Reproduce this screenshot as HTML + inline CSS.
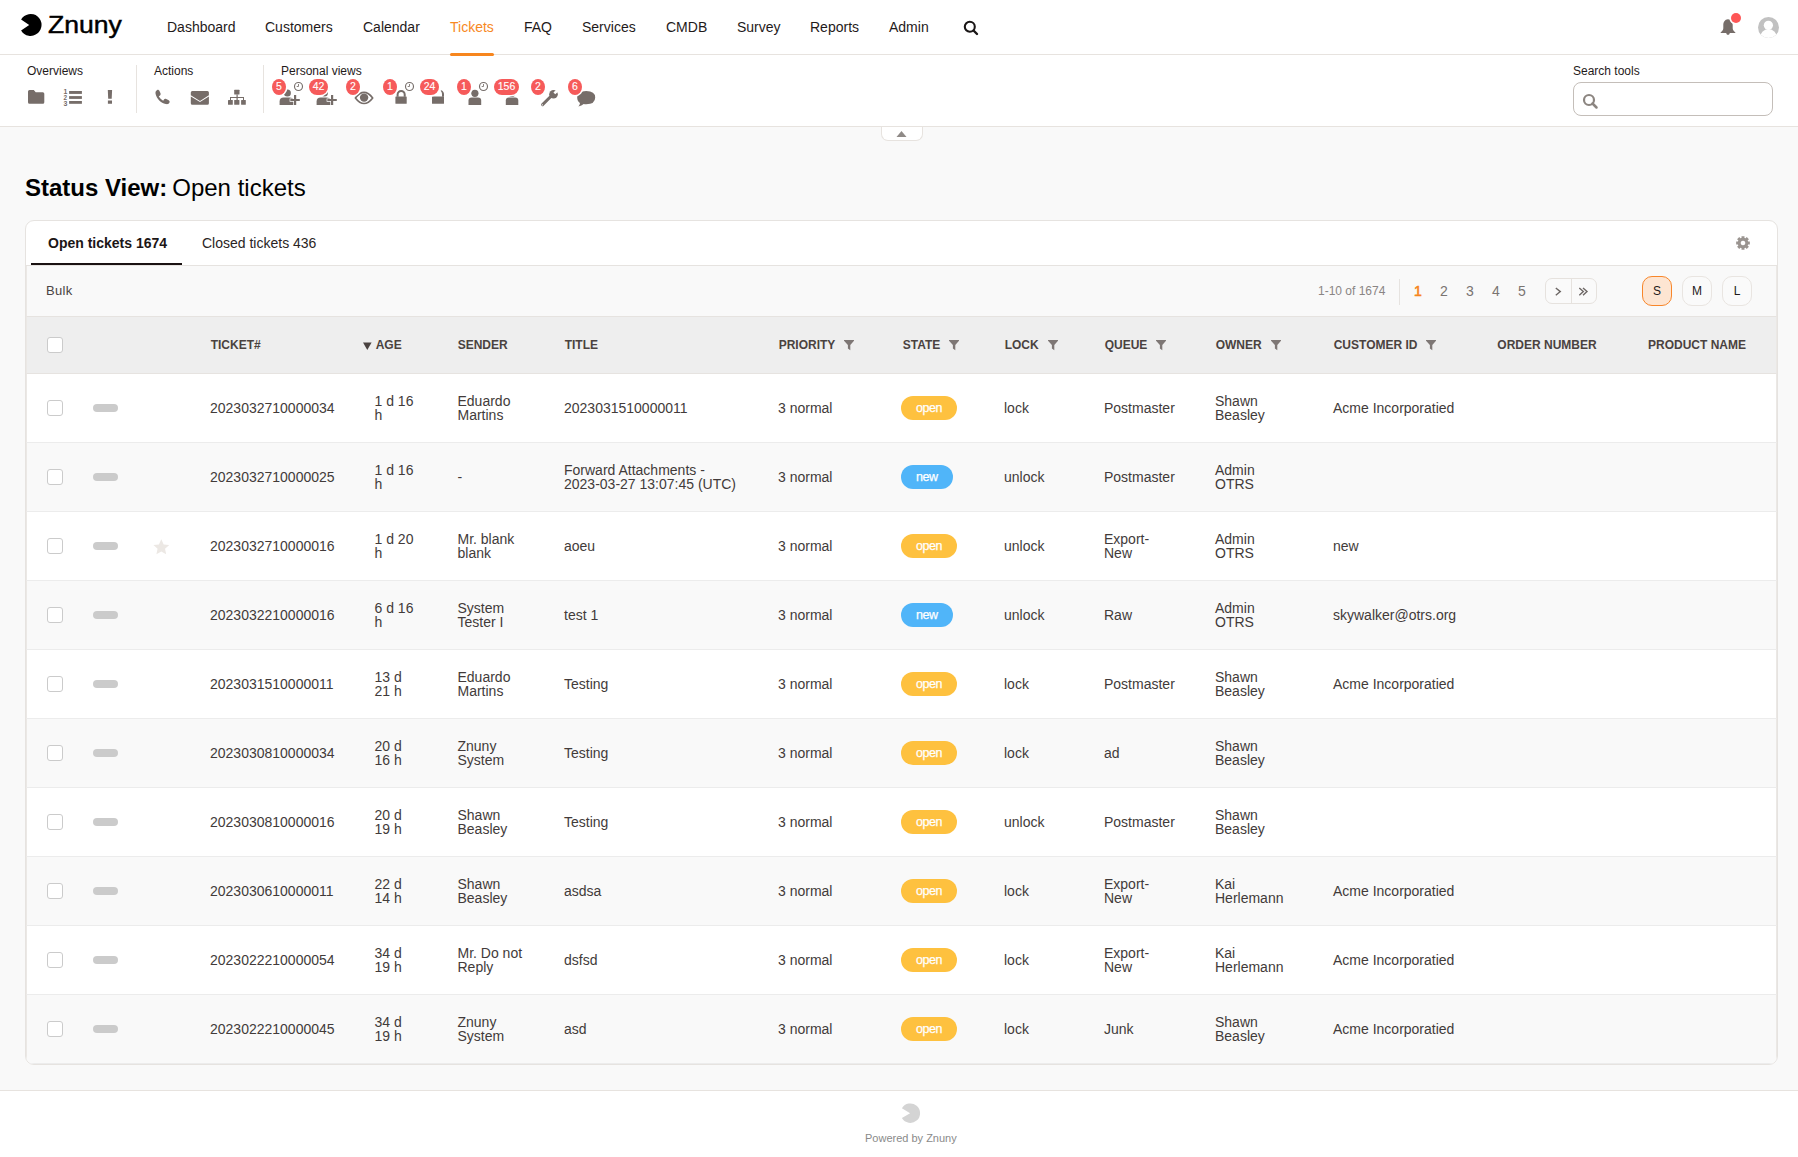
<!DOCTYPE html>
<html><head><meta charset="utf-8">
<style>
*{box-sizing:border-box;margin:0;padding:0}
html,body{width:1798px;height:1157px;overflow:hidden}
body{font-family:"Liberation Sans",sans-serif;background:#f9f9f9;color:#3a3433;position:relative}
.abs{position:absolute}
#top{position:absolute;left:0;top:0;width:1798px;height:55px;background:#fff;border-bottom:1px solid #e7e3df}
.nav{position:absolute;top:19px;font-size:14px;line-height:16px;color:#1f1a1a;white-space:nowrap}
#tb{position:absolute;left:0;top:55px;width:1798px;height:72px;background:#fff;border-bottom:1px solid #e7e3df}
.lbl{position:absolute;top:9px;font-size:12px;line-height:14px;color:#1f1a1a;white-space:nowrap}
.sep{position:absolute;top:10px;width:1px;height:48px;background:#e7e3df}
.ic{position:absolute;fill:#766d69}
.badge{position:absolute;top:24px;height:15px;min-width:14px;border-radius:8px;background:#f55a5a;color:#fff;font-size:11px;line-height:15px;text-align:center;padding:0 3px;font-weight:400}
.clk{position:absolute;top:27px;width:9px;height:9px;border:1px solid #8a827e;border-radius:50%}
.clk:after{content:"";position:absolute;left:3px;top:1px;width:2px;height:3.5px;border-right:1px solid #8a827e;border-bottom:1px solid #8a827e}
#card{position:absolute;left:25px;top:220px;width:1753px;height:845px;background:#fff;border:1px solid #e6e3e0;border-radius:9px;overflow:hidden}
.hdr{position:absolute;top:0;font-size:12px;font-weight:700;line-height:12px;color:#4a4240;white-space:nowrap;text-transform:uppercase}
.row{position:absolute;left:0;width:1751px;height:69px;border-bottom:1px solid #ececec;border-left:1px solid #ebe8e5;border-right:1px solid #ebe8e5}
.cell{position:absolute;top:0;height:68px;display:flex;align-items:center;font-size:14px;line-height:14px;white-space:nowrap;color:#423b3a}
.cb{position:absolute;width:16px;height:16px;border:1px solid #cbcbcb;border-radius:3px;background:#fff}
.pill{position:absolute;width:25px;height:8px;border-radius:4px;background:#cbcbcb}
.st{height:24px;border-radius:12px;color:#fff;font-size:12.5px;font-weight:400;line-height:24px;padding:0 15px;letter-spacing:-0.45px;-webkit-text-stroke:0.25px #fff}
.open{background:#fec13f}
.new{background:#50b5f9}
.flt{display:inline-block;vertical-align:middle;margin-left:9px}
</style></head><body>

<!-- TOP NAV -->
<div id="top">
  <svg class="abs" style="left:0;top:0" width="60" height="50" viewBox="0 0 60 50"><path d="M29.2 24.9 L21.1 19.5 A10.95 10.95 0 1 1 21.1 30.4 Z" fill="#000"/></svg>
  <div class="abs" style="left:48px;top:10.6px;font-size:23.5px;line-height:28px;font-weight:400;color:#000;-webkit-text-stroke:0.45px #000;transform:scaleX(1.13);transform-origin:0 0">Znuny</div>
  <div class="nav" style="left:167px">Dashboard</div>
  <div class="nav" style="left:265px">Customers</div>
  <div class="nav" style="left:363px">Calendar</div>
  <div class="nav" style="left:450px;color:#f7891f">Tickets</div>
  <div class="abs" style="left:450px;top:53px;width:44px;height:3px;z-index:3;border-radius:2px;background:#f7861e"></div>
  <div class="nav" style="left:524px">FAQ</div>
  <div class="nav" style="left:582px">Services</div>
  <div class="nav" style="left:666px">CMDB</div>
  <div class="nav" style="left:737px">Survey</div>
  <div class="nav" style="left:810px">Reports</div>
  <div class="nav" style="left:889px">Admin</div>
  <svg class="abs" style="left:963px;top:20px" width="16" height="16" viewBox="0 0 16 16"><circle cx="6.8" cy="6.8" r="5" fill="none" stroke="#1a1616" stroke-width="2.1"/><path d="M10.5 10.5 L14 14" stroke="#1a1616" stroke-width="2.4" stroke-linecap="round"/></svg>
  <!-- bell -->
  <svg class="abs" style="left:1710px;top:8px" width="40" height="32" viewBox="1710 8 40 32"><path d="M1728 19.2 c-3.3 0.3 -4.7 2.8 -4.7 5.9 v3.2 c0 1.7 -1.2 3 -2.6 3.9 v0.9 h14.6 v-0.9 c-1.4 -0.9 -2.6 -2.2 -2.6 -3.9 v-3.2 c0 -3.1 -1.4 -5.6 -4.7 -5.9z M1726.2 33.1 a1.8 1.8 0 0 0 3.6 0z" fill="#766d69"/><circle cx="1736" cy="18" r="6.6" fill="#fff"/><circle cx="1736" cy="18" r="5" fill="#fe5656"/></svg>
  <svg class="abs" style="left:1757px;top:16px" width="23" height="23" viewBox="0 0 23 23">
    <defs><clipPath id="avc"><circle cx="11.5" cy="11.5" r="10.5"/></clipPath></defs>
    <circle cx="11.5" cy="11.5" r="10.5" fill="#c1c1c1"/>
    <g clip-path="url(#avc)" fill="#fff"><circle cx="11.4" cy="9.3" r="4.6"/><ellipse cx="11.5" cy="22.3" rx="8.6" ry="9.2"/></g>
  </svg>
</div>

<!-- TOOLBAR -->
<div id="tb">
  <div class="lbl" style="left:27px">Overviews</div>
  <div class="lbl" style="left:154px">Actions</div>
  <div class="lbl" style="left:281px">Personal views</div>
  <div class="lbl" style="left:1573px">Search tools</div>
  <div class="sep" style="left:136px"></div>
  <div class="sep" style="left:263px"></div>
  <svg class="abs" style="left:0;top:-55px" width="1798" height="127" viewBox="0 0 1798 127"><path d="M28 91.4 q0-1.5 1.5-1.5 h4.3 l1.9 2.4 h7.1 q1.5 0 1.5 1.5 v8.5 q0 1.5 -1.5 1.5 h-13.3 q-1.5 0 -1.5 -1.5z" fill="#766d69"/><g fill="#766d69"><rect x="69.1" y="91" width="12.8" height="2.9"/><rect x="69.1" y="96.1" width="12.8" height="2.8"/><rect x="69.1" y="101" width="12.8" height="2.8"/><text x="63.6" y="93.6" font-family="Liberation Sans" font-size="7" font-weight="700">1</text><text x="63.6" y="99.8" font-family="Liberation Sans" font-size="6.4" font-weight="700">2</text><text x="63.6" y="106.3" font-family="Liberation Sans" font-size="7" font-weight="700">3</text></g><path d="M107.8 90 h4.3 l-0.4 8.7 h-3.5z M107.9 100.6 h4.1 v3.2 h-4.1z" fill="#766d69"/><path d="M157.2 89.9 c1.1 -0.3 1.9 0.3 2.4 1.3 l0.9 2.1 c0.4 1 0.1 1.8 -0.8 2.4 l-0.9 0.6 c0.9 1.9 2.5 3.5 4.4 4.4 l0.6 -0.9 c0.6 -0.9 1.4 -1.2 2.4 -0.8 l2.1 0.9 c1 0.5 1.6 1.3 1.3 2.4 c-0.5 1.6 -2 2.2 -3.8 1.8 c-5 -1.2 -9 -5.2 -10.2 -10.2 c-0.4 -1.8 0.2 -3.4 1.6 -4z" fill="#766d69"/><path d="M192.3 90.9 h15.1 q1.5 0 1.5 1.5 v2.9 l-8.9 5.6 l-9.2 -5.6 v-2.9 q0 -1.5 1.5 -1.5z M190.8 96.5 l9.2 5.6 l8.9 -5.6 v6.8 q0 1.5 -1.5 1.5 h-15.1 q-1.5 0 -1.5 -1.5z" fill="#766d69"/><g fill="#766d69"><rect x="234.2" y="89.8" width="5.3" height="4.8" rx="0.5"/><rect x="236.5" y="94.4" width="1.2" height="3.2"/><rect x="230" y="97" width="14" height="1"/><rect x="230" y="97" width="1" height="3.3"/><rect x="243" y="97" width="1" height="3.3"/><rect x="236.5" y="97" width="1.2" height="3.3"/><rect x="228" y="100.1" width="4.8" height="4.7" rx="0.5"/><rect x="234.2" y="100.1" width="5.2" height="4.7" rx="0.5"/><rect x="241.1" y="100.1" width="4.7" height="4.7" rx="0.5"/></g><g fill="#766d69"><circle cx="287.40000000000003" cy="93.1" r="3.5"/><path d="M279.6 104.9 v-3.3 q0 -4.1 4.1 -4.1 h5.8 q3.6 0 4.3 2.5 v4.9z"/></g><path d="M294.0 95.1 h2.2 v4 h3.6 v2 h-3.6 v3.8 h-2.2 v-3.8 h-3.7 v-2 h3.7z" fill="#766d69" stroke="#fff" stroke-width="1.3" paint-order="stroke"/><g fill="#766d69"><circle cx="324.40000000000003" cy="93.1" r="3.5"/><path d="M316.6 104.9 v-3.3 q0 -4.1 4.1 -4.1 h5.8 q3.6 0 4.3 2.5 v4.9z"/></g><path d="M331.0 95.1 h2.2 v4 h3.6 v2 h-3.6 v3.8 h-2.2 v-3.8 h-3.7 v-2 h3.7z" fill="#766d69" stroke="#fff" stroke-width="1.3" paint-order="stroke"/><path d="M355.4 97.9 q8.6 -11.2 17.3 0 q-8.7 11.2 -17.3 0z" fill="none" stroke="#766d69" stroke-width="1.7" stroke-linejoin="round"/><circle cx="364.1" cy="97.6" r="4.2" fill="#766d69"/><g fill="#766d69"><path d="M396.6 96.8 v-2.3 a4.55 4.55 0 0 1 9.1 0 v2.3 h-2 v-2.3 a2.55 2.55 0 0 0 -5.1 0 v2.3z"/><rect x="395.4" y="96.5" width="11.3" height="7.3" rx="0.6"/></g><g fill="#766d69"><path d="M442 96.8 v-2.6 c0 -1.5 -0.5 -2.7 -1.4 -3.5 l0.9 -0.4 c1.6 0.9 2.5 2.3 2.5 4 v2.5z"/><rect x="432" y="96.5" width="12" height="7.3" rx="0.6"/></g><g fill="#766d69"><circle cx="474.9" cy="93.3" r="3.6"/><path d="M468.5 104.9 v-4.3 q0 -3.2 3.2 -3.2 h6.3 q3.2 0 3.2 3.2 v4.3z"/></g><g fill="#766d69"><circle cx="511.9" cy="93.3" r="3.6"/><path d="M505.8 104.9 v-4.3 q0 -3.2 3.2 -3.2 h6.1 q3.2 0 3.2 3.2 v4.3z"/></g><g><circle cx="553.5" cy="94.2" r="4.3" fill="#766d69"/><path d="M542.6 104.6 L551 96.3" stroke="#766d69" stroke-width="3" stroke-linecap="round"/><path d="M553.43 92.43 L555.27 94.27 L558.9 90.9 L557 89z" fill="#fff"/><circle cx="542.4" cy="104.8" r="0.65" fill="#fff"/></g><path d="M586.2 90.9 q9 0 9 6.6 q0 6.7 -9 6.7 q-1.3 0 -2.5 -0.3 q-2 1.8 -5.3 2.7 q1.4 -1.5 1.6 -3.6 q-2.8 -1.8 -2.8 -5.5 q0 -6.6 9 -6.6z" fill="#766d69"/><rect x="270.5" y="77.5" width="17" height="19" rx="9.5" fill="#fff"/><rect x="272" y="79" width="14" height="16" rx="8" fill="#f65a5a"/><text x="279.0" y="90.3" text-anchor="middle" font-family="Liberation Sans" font-size="10.5" fill="#fff" stroke="#fff" stroke-width="0.12">5</text><rect x="307.5" y="77.5" width="22" height="19" rx="9.5" fill="#fff"/><rect x="309" y="79" width="19" height="16" rx="8" fill="#f65a5a"/><text x="318.5" y="90.3" text-anchor="middle" font-family="Liberation Sans" font-size="10.5" fill="#fff" stroke="#fff" stroke-width="0.12">42</text><rect x="344.5" y="77.5" width="17" height="19" rx="9.5" fill="#fff"/><rect x="346" y="79" width="14" height="16" rx="8" fill="#f65a5a"/><text x="353.0" y="90.3" text-anchor="middle" font-family="Liberation Sans" font-size="10.5" fill="#fff" stroke="#fff" stroke-width="0.12">2</text><rect x="381.5" y="77.5" width="17" height="19" rx="9.5" fill="#fff"/><rect x="383" y="79" width="14" height="16" rx="8" fill="#f65a5a"/><text x="390.0" y="90.3" text-anchor="middle" font-family="Liberation Sans" font-size="10.5" fill="#fff" stroke="#fff" stroke-width="0.12">1</text><rect x="418.5" y="77.5" width="22" height="19" rx="9.5" fill="#fff"/><rect x="420" y="79" width="19" height="16" rx="8" fill="#f65a5a"/><text x="429.5" y="90.3" text-anchor="middle" font-family="Liberation Sans" font-size="10.5" fill="#fff" stroke="#fff" stroke-width="0.12">24</text><rect x="455.5" y="77.5" width="17" height="19" rx="9.5" fill="#fff"/><rect x="457" y="79" width="14" height="16" rx="8" fill="#f65a5a"/><text x="464.0" y="90.3" text-anchor="middle" font-family="Liberation Sans" font-size="10.5" fill="#fff" stroke="#fff" stroke-width="0.12">1</text><rect x="492.5" y="77.5" width="28" height="19" rx="9.5" fill="#fff"/><rect x="494" y="79" width="25" height="16" rx="8" fill="#f65a5a"/><text x="506.5" y="90.3" text-anchor="middle" font-family="Liberation Sans" font-size="10.5" fill="#fff" stroke="#fff" stroke-width="0.12">156</text><rect x="529.5" y="77.5" width="17" height="19" rx="9.5" fill="#fff"/><rect x="531" y="79" width="14" height="16" rx="8" fill="#f65a5a"/><text x="538.0" y="90.3" text-anchor="middle" font-family="Liberation Sans" font-size="10.5" fill="#fff" stroke="#fff" stroke-width="0.12">2</text><rect x="566.5" y="77.5" width="17" height="19" rx="9.5" fill="#fff"/><rect x="568" y="79" width="14" height="16" rx="8" fill="#f65a5a"/><text x="575.0" y="90.3" text-anchor="middle" font-family="Liberation Sans" font-size="10.5" fill="#fff" stroke="#fff" stroke-width="0.12">6</text><circle cx="298.5" cy="86.5" r="4" fill="#fff" stroke="#766e6a" stroke-width="1.15"/><path d="M298.5 84.0 V86.5 H296.7" fill="none" stroke="#7e7672" stroke-width="0.9"/><circle cx="409.5" cy="86.5" r="4" fill="#fff" stroke="#766e6a" stroke-width="1.15"/><path d="M409.5 84.0 V86.5 H407.7" fill="none" stroke="#7e7672" stroke-width="0.9"/><circle cx="483.5" cy="86.5" r="4" fill="#fff" stroke="#766e6a" stroke-width="1.15"/><path d="M483.5 84.0 V86.5 H481.7" fill="none" stroke="#7e7672" stroke-width="0.9"/></svg>
  <div class="abs" style="left:1573px;top:27px;width:200px;height:34px;border:1px solid #c4beb9;border-radius:8px;background:#fff"></div>
  <svg class="abs" style="left:1582px;top:38px" width="17" height="17" viewBox="0 0 17 17"><circle cx="7" cy="7" r="5" fill="none" stroke="#8c8580" stroke-width="2.2"/><path d="M10.5 10.5 L14.5 14.5" stroke="#8c8580" stroke-width="2.5" stroke-linecap="round"/></svg>
</div>

<!-- collapse tab -->
<div class="abs" style="left:881px;top:127px;width:42px;height:14px;background:#fff;border:1px solid #e7e3df;border-top:none;border-radius:0 0 7px 7px"></div>
<svg class="abs" style="left:896px;top:130px" width="11" height="8" viewBox="0 0 11 8"><path d="M0.5 7 L5.5 1 L10.5 7z" fill="#8f8a87"/></svg>

<div class="abs" style="left:25px;top:174px;font-size:24px;line-height:28px;color:#000;white-space:nowrap"><b>Status View:</b> <span style="margin-left:-1.7px">Open tickets</span></div>

<!-- CARD -->
<div id="card">
  <div class="abs" style="left:22px;top:14px;font-size:14px;line-height:16px;font-weight:700;color:#1c1616">Open tickets 1674</div>
  <div class="abs" style="left:176px;top:14px;font-size:14px;line-height:16px;color:#2a2424">Closed tickets 436</div>
  <div class="abs" style="left:5px;top:42px;width:151px;height:3px;background:#1a1212"></div>
  <div class="abs" style="left:0;top:44px;width:1753px;height:1px;background:#e6e3e0"></div>
  <svg class="abs" style="left:1709px;top:14.3px" width="16" height="16" viewBox="0 0 16 16" id="gear"><path d="M6.52 2.91 L6.50 1.16 L9.50 1.16 L9.48 2.91 L10.55 3.35 L11.77 2.10 L13.90 4.23 L12.65 5.45 L13.09 6.52 L14.84 6.50 L14.84 9.50 L13.09 9.48 L12.65 10.55 L13.90 11.77 L11.77 13.90 L10.55 12.65 L9.48 13.09 L9.50 14.84 L6.50 14.84 L6.52 13.09 L5.45 12.65 L4.23 13.90 L2.10 11.77 L3.35 10.55 L2.91 9.48 L1.16 9.50 L1.16 6.50 L2.91 6.52 L3.35 5.45 L2.10 4.23 L4.23 2.10 L5.45 3.35z M8 5.7 a2.3 2.3 0 1 0 0.001 0z" fill="#9a9490" fill-rule="evenodd"/></svg>
  <!-- bulk bar -->
  <div class="abs" style="left:0;top:45px;width:1751px;height:51px;background:#f9f9f9;border-bottom:1px solid #e6e3e0;border-left:1px solid #ebe8e5;border-right:1px solid #ebe8e5"></div>
  <div class="abs" style="left:20px;top:63px;font-size:13px;line-height:14px;color:#4a4444;letter-spacing:0.3px">Bulk</div>
  <div class="abs" style="left:1292px;top:63px;font-size:12px;line-height:14px;color:#8a8584;white-space:nowrap">1-10 of 1674</div><div class="abs" style="left:1373px;top:58px;width:1px;height:26px;background:#e6e3e0"></div><div class="abs" style="left:1388px;top:62px;font-size:14px;line-height:16px;color:#f7861e;font-weight:400;-webkit-text-stroke:0.6px #f7861e">1</div><div class="abs" style="left:1414px;top:62px;font-size:14px;line-height:16px;color:#7a7471">2</div><div class="abs" style="left:1440px;top:62px;font-size:14px;line-height:16px;color:#7a7471">3</div><div class="abs" style="left:1466px;top:62px;font-size:14px;line-height:16px;color:#7a7471">4</div><div class="abs" style="left:1492px;top:62px;font-size:14px;line-height:16px;color:#7a7471">5</div><div class="abs" style="left:1519px;top:57px;width:52px;height:26px;border:1px solid #e6e2de;border-radius:7px;background:#fafafa"></div><div class="abs" style="left:1545px;top:57px;width:1px;height:26px;background:#e6e2de"></div><svg class="abs" style="left:1524px;top:62px" width="40" height="16" viewBox="1550 283 40 16"><path d="M1555.8 288 L1560.3 291.6 L1555.8 295.2 M1579.3 288 L1583.3 291.6 L1579.3 295.2 M1583 288 L1587 291.6 L1583 295.2" fill="none" stroke="#6e6866" stroke-width="1.4"/></svg><div class="abs" style="left:1616px;top:55px;width:30px;height:30px;border-radius:10px;background:#fde5d2;border:1px solid #f8862a;color:#1f1a1a;font-size:12px;line-height:28px;text-align:center">S</div><div class="abs" style="left:1656px;top:55px;width:30px;height:30px;border-radius:10px;background:#fafafa;border:1px solid #e9e5e1;color:#1f1a1a;font-size:12px;line-height:28px;text-align:center">M</div><div class="abs" style="left:1696px;top:55px;width:30px;height:30px;border-radius:10px;background:#fafafa;border:1px solid #e9e5e1;color:#1f1a1a;font-size:12px;line-height:28px;text-align:center">L</div>
  <!-- header -->
  <div class="abs" style="left:0;top:96px;width:1751px;height:57px;background:#eeeeee;border-bottom:1px solid #e6e3e0;border-left:1px solid #ebe8e5;border-right:1px solid #ebe8e5" id="thead"></div><div class="hdr" style="left:184.7px;top:118px">Ticket#</div><div class="hdr" style="left:349.7px;top:118px">Age</div><div class="hdr" style="left:431.7px;top:118px">Sender</div><div class="hdr" style="left:538.7px;top:118px">Title</div><div class="hdr" style="left:752.7px;top:118px">Priority<svg style="display:inline-block;vertical-align:top;margin-left:9px;margin-top:1px" width="11" height="11" viewBox="0 0 11 11"><path d="M0 0 h10 v0.8 l-3.7 4.2 v5.3 l-2.4 -1.8 v-3.5 l-3.9 -4.2z" fill="#7e7775"/></svg></div><div class="hdr" style="left:876.7px;top:118px">State<svg style="display:inline-block;vertical-align:top;margin-left:9px;margin-top:1px" width="11" height="11" viewBox="0 0 11 11"><path d="M0 0 h10 v0.8 l-3.7 4.2 v5.3 l-2.4 -1.8 v-3.5 l-3.9 -4.2z" fill="#7e7775"/></svg></div><div class="hdr" style="left:978.7px;top:118px">Lock<svg style="display:inline-block;vertical-align:top;margin-left:9px;margin-top:1px" width="11" height="11" viewBox="0 0 11 11"><path d="M0 0 h10 v0.8 l-3.7 4.2 v5.3 l-2.4 -1.8 v-3.5 l-3.9 -4.2z" fill="#7e7775"/></svg></div><div class="hdr" style="left:1078.7px;top:118px">Queue<svg style="display:inline-block;vertical-align:top;margin-left:9px;margin-top:1px" width="11" height="11" viewBox="0 0 11 11"><path d="M0 0 h10 v0.8 l-3.7 4.2 v5.3 l-2.4 -1.8 v-3.5 l-3.9 -4.2z" fill="#7e7775"/></svg></div><div class="hdr" style="left:1189.7px;top:118px">Owner<svg style="display:inline-block;vertical-align:top;margin-left:9px;margin-top:1px" width="11" height="11" viewBox="0 0 11 11"><path d="M0 0 h10 v0.8 l-3.7 4.2 v5.3 l-2.4 -1.8 v-3.5 l-3.9 -4.2z" fill="#7e7775"/></svg></div><div class="hdr" style="left:1307.7px;top:118px">Customer ID<svg style="display:inline-block;vertical-align:top;margin-left:9px;margin-top:1px" width="11" height="11" viewBox="0 0 11 11"><path d="M0 0 h10 v0.8 l-3.7 4.2 v5.3 l-2.4 -1.8 v-3.5 l-3.9 -4.2z" fill="#7e7775"/></svg></div><div class="hdr" style="left:1471.3px;top:118px">Order Number</div><div class="hdr" style="left:1622.0px;top:118px">Product Name</div><svg class="abs" style="left:337px;top:121px" width="9" height="9" viewBox="0 0 9 9"><path d="M0 0.5 h8.6 l-4.3 7.6z" fill="#4a4240"/></svg><div class="cb" style="left:21px;top:116px"></div>
  <div class="row" style="top:153px;background:#fff"><div class="cb" style="left:20px;top:26px"></div><div class="pill" style="left:66px;top:30px"></div><div class="cell" style="left:183px"><div>2023032710000034</div></div><div class="cell" style="left:347.5px"><div>1 d 16<br>h</div></div><div class="cell" style="left:430.5px"><div>Eduardo<br>Martins</div></div><div class="cell" style="left:537px"><div>2023031510000011</div></div><div class="cell" style="left:751px"><div>3 normal</div></div><div class="cell" style="left:874px"><div class="st open">open</div></div><div class="cell" style="left:977px"><div>lock</div></div><div class="cell" style="left:1077px"><div>Postmaster</div></div><div class="cell" style="left:1188px"><div>Shawn<br>Beasley</div></div><div class="cell" style="left:1306px"><div>Acme Incorporatied</div></div></div><div class="row" style="top:222px;background:#f9f9f9"><div class="cb" style="left:20px;top:26px"></div><div class="pill" style="left:66px;top:30px"></div><div class="cell" style="left:183px"><div>2023032710000025</div></div><div class="cell" style="left:347.5px"><div>1 d 16<br>h</div></div><div class="cell" style="left:430.5px"><div>-</div></div><div class="cell" style="left:537px"><div>Forward Attachments -<br>2023-03-27 13:07:45 (UTC)</div></div><div class="cell" style="left:751px"><div>3 normal</div></div><div class="cell" style="left:874px"><div class="st new">new</div></div><div class="cell" style="left:977px"><div>unlock</div></div><div class="cell" style="left:1077px"><div>Postmaster</div></div><div class="cell" style="left:1188px"><div>Admin<br>OTRS</div></div></div><div class="row" style="top:291px;background:#fff"><div class="cb" style="left:20px;top:26px"></div><div class="pill" style="left:66px;top:30px"></div><svg class="abs" style="left:125.6px;top:26.6px" width="16.6" height="16.6" viewBox="0 0 16 16"><path d="M8 0.3 l2.3 4.9 l5.3 0.6 l-4 3.6 l1.1 5.3 l-4.7 -2.7 l-4.7 2.7 l1.1 -5.3 l-4 -3.6 l5.3 -0.6z" fill="#ece8e4"/></svg><div class="cell" style="left:183px"><div>2023032710000016</div></div><div class="cell" style="left:347.5px"><div>1 d 20<br>h</div></div><div class="cell" style="left:430.5px"><div>Mr. blank<br>blank</div></div><div class="cell" style="left:537px"><div>aoeu</div></div><div class="cell" style="left:751px"><div>3 normal</div></div><div class="cell" style="left:874px"><div class="st open">open</div></div><div class="cell" style="left:977px"><div>unlock</div></div><div class="cell" style="left:1077px"><div>Export-<br>New</div></div><div class="cell" style="left:1188px"><div>Admin<br>OTRS</div></div><div class="cell" style="left:1306px"><div>new</div></div></div><div class="row" style="top:360px;background:#f9f9f9"><div class="cb" style="left:20px;top:26px"></div><div class="pill" style="left:66px;top:30px"></div><div class="cell" style="left:183px"><div>2023032210000016</div></div><div class="cell" style="left:347.5px"><div>6 d 16<br>h</div></div><div class="cell" style="left:430.5px"><div>System<br>Tester I</div></div><div class="cell" style="left:537px"><div>test 1</div></div><div class="cell" style="left:751px"><div>3 normal</div></div><div class="cell" style="left:874px"><div class="st new">new</div></div><div class="cell" style="left:977px"><div>unlock</div></div><div class="cell" style="left:1077px"><div>Raw</div></div><div class="cell" style="left:1188px"><div>Admin<br>OTRS</div></div><div class="cell" style="left:1306px"><div>skywalker@otrs.org</div></div></div><div class="row" style="top:429px;background:#fff"><div class="cb" style="left:20px;top:26px"></div><div class="pill" style="left:66px;top:30px"></div><div class="cell" style="left:183px"><div>2023031510000011</div></div><div class="cell" style="left:347.5px"><div>13 d<br>21 h</div></div><div class="cell" style="left:430.5px"><div>Eduardo<br>Martins</div></div><div class="cell" style="left:537px"><div>Testing</div></div><div class="cell" style="left:751px"><div>3 normal</div></div><div class="cell" style="left:874px"><div class="st open">open</div></div><div class="cell" style="left:977px"><div>lock</div></div><div class="cell" style="left:1077px"><div>Postmaster</div></div><div class="cell" style="left:1188px"><div>Shawn<br>Beasley</div></div><div class="cell" style="left:1306px"><div>Acme Incorporatied</div></div></div><div class="row" style="top:498px;background:#f9f9f9"><div class="cb" style="left:20px;top:26px"></div><div class="pill" style="left:66px;top:30px"></div><div class="cell" style="left:183px"><div>2023030810000034</div></div><div class="cell" style="left:347.5px"><div>20 d<br>16 h</div></div><div class="cell" style="left:430.5px"><div>Znuny<br>System</div></div><div class="cell" style="left:537px"><div>Testing</div></div><div class="cell" style="left:751px"><div>3 normal</div></div><div class="cell" style="left:874px"><div class="st open">open</div></div><div class="cell" style="left:977px"><div>lock</div></div><div class="cell" style="left:1077px"><div>ad</div></div><div class="cell" style="left:1188px"><div>Shawn<br>Beasley</div></div></div><div class="row" style="top:567px;background:#fff"><div class="cb" style="left:20px;top:26px"></div><div class="pill" style="left:66px;top:30px"></div><div class="cell" style="left:183px"><div>2023030810000016</div></div><div class="cell" style="left:347.5px"><div>20 d<br>19 h</div></div><div class="cell" style="left:430.5px"><div>Shawn<br>Beasley</div></div><div class="cell" style="left:537px"><div>Testing</div></div><div class="cell" style="left:751px"><div>3 normal</div></div><div class="cell" style="left:874px"><div class="st open">open</div></div><div class="cell" style="left:977px"><div>unlock</div></div><div class="cell" style="left:1077px"><div>Postmaster</div></div><div class="cell" style="left:1188px"><div>Shawn<br>Beasley</div></div></div><div class="row" style="top:636px;background:#f9f9f9"><div class="cb" style="left:20px;top:26px"></div><div class="pill" style="left:66px;top:30px"></div><div class="cell" style="left:183px"><div>2023030610000011</div></div><div class="cell" style="left:347.5px"><div>22 d<br>14 h</div></div><div class="cell" style="left:430.5px"><div>Shawn<br>Beasley</div></div><div class="cell" style="left:537px"><div>asdsa</div></div><div class="cell" style="left:751px"><div>3 normal</div></div><div class="cell" style="left:874px"><div class="st open">open</div></div><div class="cell" style="left:977px"><div>lock</div></div><div class="cell" style="left:1077px"><div>Export-<br>New</div></div><div class="cell" style="left:1188px"><div>Kai<br>Herlemann</div></div><div class="cell" style="left:1306px"><div>Acme Incorporatied</div></div></div><div class="row" style="top:705px;background:#fff"><div class="cb" style="left:20px;top:26px"></div><div class="pill" style="left:66px;top:30px"></div><div class="cell" style="left:183px"><div>2023022210000054</div></div><div class="cell" style="left:347.5px"><div>34 d<br>19 h</div></div><div class="cell" style="left:430.5px"><div>Mr. Do not<br>Reply</div></div><div class="cell" style="left:537px"><div>dsfsd</div></div><div class="cell" style="left:751px"><div>3 normal</div></div><div class="cell" style="left:874px"><div class="st open">open</div></div><div class="cell" style="left:977px"><div>lock</div></div><div class="cell" style="left:1077px"><div>Export-<br>New</div></div><div class="cell" style="left:1188px"><div>Kai<br>Herlemann</div></div><div class="cell" style="left:1306px"><div>Acme Incorporatied</div></div></div><div class="row" style="top:774px;background:#f9f9f9"><div class="cb" style="left:20px;top:26px"></div><div class="pill" style="left:66px;top:30px"></div><div class="cell" style="left:183px"><div>2023022210000045</div></div><div class="cell" style="left:347.5px"><div>34 d<br>19 h</div></div><div class="cell" style="left:430.5px"><div>Znuny<br>System</div></div><div class="cell" style="left:537px"><div>asd</div></div><div class="cell" style="left:751px"><div>3 normal</div></div><div class="cell" style="left:874px"><div class="st open">open</div></div><div class="cell" style="left:977px"><div>lock</div></div><div class="cell" style="left:1077px"><div>Junk</div></div><div class="cell" style="left:1188px"><div>Shawn<br>Beasley</div></div><div class="cell" style="left:1306px"><div>Acme Incorporatied</div></div></div>
</div>

<!-- footer -->
<div class="abs" style="left:0;top:1090px;width:1798px;height:67px;background:#fff;border-top:1px solid #e7e3df"></div>
<svg class="abs" style="left:880px;top:1090px" width="60" height="40" viewBox="880 1090 60 40"><path d="M910.1 1113.2 L901.9 1108.25 A9.75 9.75 0 1 1 901.9 1118.05 Z" fill="#d4d4d4"/></svg>
<div class="abs" style="left:865px;top:1132px;font-size:11px;line-height:12px;color:#8a8a8a;white-space:nowrap">Powered by Znuny</div>

</body></html>
